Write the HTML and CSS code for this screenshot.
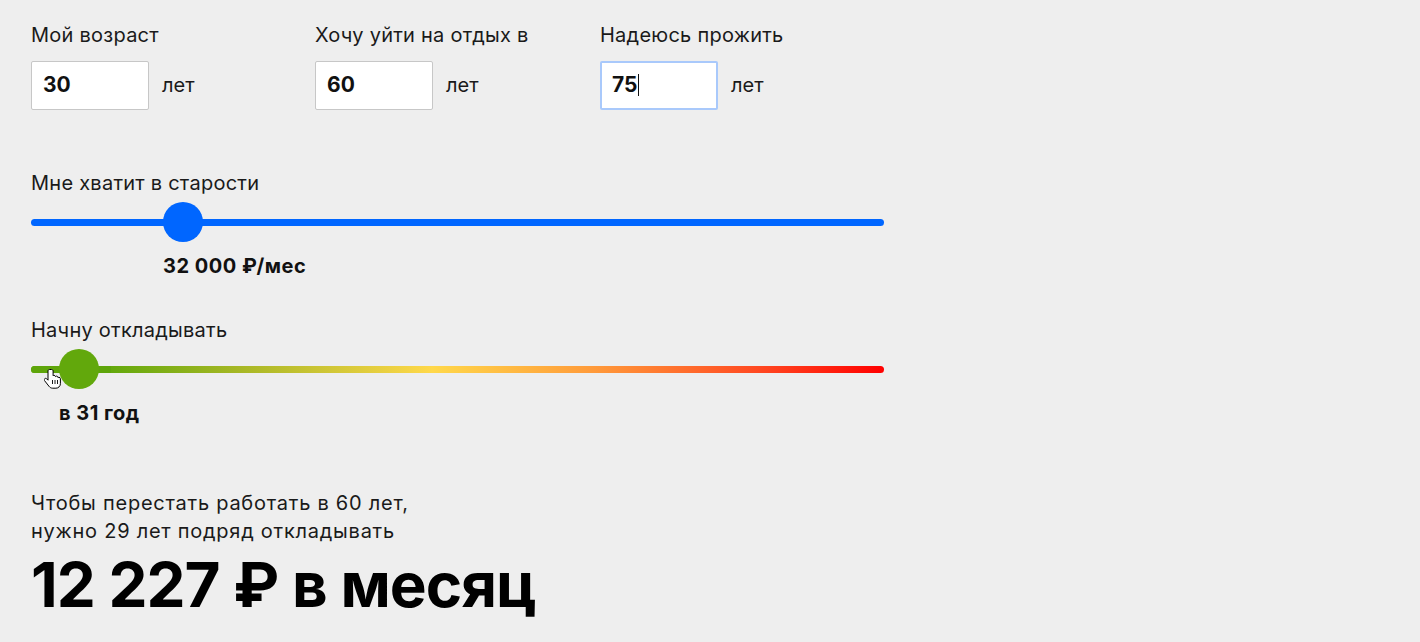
FILE: index.html
```html
<!DOCTYPE html>
<html lang="ru">
<head>
<meta charset="utf-8">
<title>Калькулятор пенсии</title>
<link rel="stylesheet" href="styles.css">
</head>
<body>
<div class="page">
  <div class="ages">
    <div class="age-field">
      <div class="label">Мой возраст</div>
      <div class="input-row">
        <div class="input">30</div>
        <span class="unit">лет</span>
      </div>
    </div>
    <div class="age-field">
      <div class="label">Хочу уйти на отдых в</div>
      <div class="input-row">
        <div class="input">60</div>
        <span class="unit">лет</span>
      </div>
    </div>
    <div class="age-field">
      <div class="label">Надеюсь прожить</div>
      <div class="input-row">
        <div class="input input-focus">75<span class="caret"></span></div>
        <span class="unit">лет</span>
      </div>
    </div>
  </div>

  <div class="slider-block slider-money">
    <div class="label">Мне хватит в старости</div>
    <div class="slider">
      <div class="track track-blue"></div>
      <div class="thumb thumb-blue" style="left: 132px"></div>
    </div>
    <div class="slider-value" style="padding-left: 132px">32 000 ₽/мес</div>
  </div>

  <div class="slider-block slider-start">
    <div class="label">Начну откладывать</div>
    <div class="slider">
      <div class="track track-gradient"></div>
      <div class="track-fill" style="width: 80px"></div>
      <div class="thumb thumb-green" style="left: 28px"></div>
      <svg class="cursor" width="18" height="22" viewBox="0 0 18 22" aria-hidden="true">
        <path d="M5.5 1.5c-.9 0-1.5.7-1.5 1.5v9.2l-1.3-1.4c-.6-.6-1.6-.6-2.1 0-.5.5-.5 1.3 0 1.9l4.4 5.6c.9 1.2 2.2 1.9 3.7 1.9h3.2c2.5 0 4.5-2 4.5-4.5v-5c0-.8-.6-1.4-1.4-1.4-.4 0-.8.2-1 .5v-.3c0-.8-.6-1.4-1.4-1.4-.4 0-.8.2-1.1.5-.1-.7-.7-1.2-1.4-1.2-.4 0-.7.1-1 .4V3c0-.8-.6-1.5-1.6-1.5z" fill="#fff" stroke="#000" stroke-width="1"/>
        <path d="M8.5 12v4M11 12v4M13.5 12v4" stroke="#000" stroke-width="0.9"/>
      </svg>
    </div>
    <div class="slider-value" style="padding-left: 28px">в 31 год</div>
  </div>

  <div class="result">
    <p class="result-text">Чтобы перестать работать в 60 лет,<br>нужно 29 лет подряд откладывать</p>
    <div class="result-sum">12 227 ₽ в месяц</div>
  </div>
</div>
</body>
</html>
```

FILE: styles.css
```css
* {
  box-sizing: border-box;
}

html, body {
  margin: 0;
  padding: 0;
  background: #eeeeee;
}

body {
  font-family: Inter, "Noto Sans", "Liberation Sans", sans-serif;
  color: #111;
  width: 1420px;
  height: 642px;
  overflow: hidden;
}

.page {
  padding: 23px 0 0 31px;
}

.label {
  font-size: 20px;
  line-height: 24px;
  color: #1a1a1a;
  letter-spacing: 0.25px;
}

.ages {
  display: grid;
  grid-template-columns: 284px 285px 300px;
}

.input-row {
  display: flex;
  align-items: center;
  margin-top: 14px;
}

.input {
  width: 118px;
  height: 49px;
  background: #fff;
  border: 1px solid #c7c7c7;
  border-radius: 2px;
  padding-left: 11px;
  padding-bottom: 2px;
  display: flex;
  align-items: center;
  font-size: 21px;
  font-weight: 700;
  color: #111;
}

.input-focus {
  border: 2px solid #a9c9fb;
  padding-left: 10px;
}

.caret {
  display: inline-block;
  width: 1px;
  height: 22px;
  background: #111;
  margin-left: 1px;
}

.unit {
  margin-left: 13px;
  margin-bottom: 2px;
  font-size: 20px;
  color: #1a1a1a;
}

.slider-block {
  width: 853px;
}

.slider-money {
  margin-top: 61px;
}

.slider-start {
  margin-top: 40px;
}

.slider {
  position: relative;
  height: 40px;
  margin-top: 6px;
}

.track {
  position: absolute;
  left: 0;
  right: 0;
  top: 18px;
  height: 7px;
  border-radius: 4px;
}

.track-blue {
  background: #0066ff;
}

.track-gradient {
  background: linear-gradient(90deg, #62a80c 0%, #62a80c 9%, #a9b826 25%, #ffd84a 47%, #ff9a3a 66%, #ff4a22 85%, #ff0000 100%);
}

.track-fill {
  position: absolute;
  left: 0;
  top: 18px;
  height: 7px;
  border-radius: 4px 0 0 4px;
  background: #5ea50a;
}

.thumb {
  position: absolute;
  top: 1px;
  width: 40px;
  height: 40px;
  border-radius: 50%;
}

.thumb-blue {
  background: #0066ff;
}

.thumb-green {
  background: #62a80c;
}

.cursor {
  position: absolute;
  left: 13px;
  top: 20px;
}

.slider-value {
  margin-top: 13px;
  font-size: 20px;
  line-height: 24px;
  font-weight: 700;
  color: #111;
  letter-spacing: 0.5px;
}

.result {
  margin-top: 64px;
}

.result-text {
  margin: 0;
  font-size: 20px;
  line-height: 28px;
  color: #1a1a1a;
  letter-spacing: 0.75px;
}

.result-sum {
  margin-top: 4px;
  font-size: 62px;
  line-height: 72px;
  font-weight: 700;
  color: #000;
  letter-spacing: -1px;
}
```
